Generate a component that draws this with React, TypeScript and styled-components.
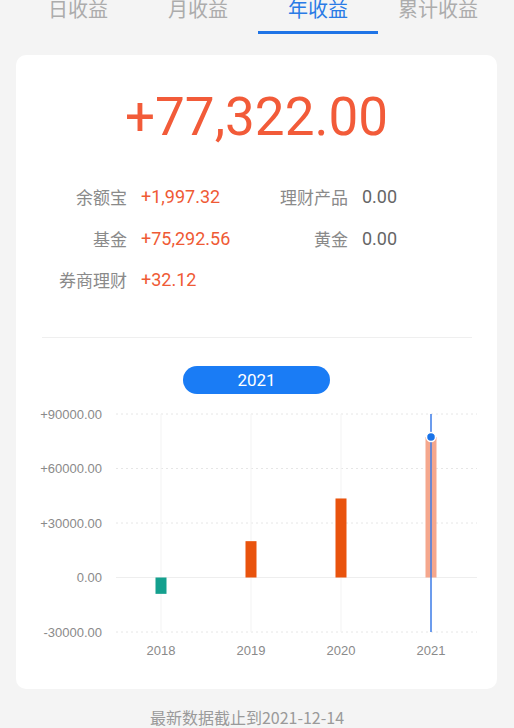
import React from "react";
import styled, { createGlobalStyle } from "styled-components";

const GlobalStyle = createGlobalStyle`
  html, body { margin: 0; padding: 0; background: #f4f4f4; }
  body { font-family: Roboto, "Noto Sans CJK SC", sans-serif; }
`;

const Page = styled.div`
  width: 514px;
  display: flex;
  flex-direction: column;
`;

const Tabs = styled.div`
  display: grid;
  grid-template-columns: repeat(4, 120px);
  margin-left: 18px;
  margin-top: -1px;
`;

const Tab = styled.div<{ $active?: boolean }>`
  height: 35px;
  box-sizing: border-box;
  text-align: center;
  font-family: "Noto Sans CJK SC", sans-serif;
  font-size: 20px;
  line-height: 20px;
  color: ${(p) => (p.$active ? "#2a7be6" : "#acacac")};
  border-bottom: 3px solid ${(p) => (p.$active ? "#1f74e6" : "transparent")};
`;

const Card = styled.div`
  margin: 21px 17px 0 16px;
  background: #ffffff;
  border-radius: 10px;
  padding: 30px 0 19px;
  display: flex;
  flex-direction: column;
`;

const BigNumber = styled.div`
  text-align: center;
  font-family: Roboto, sans-serif;
  font-size: 53px;
  line-height: 64px;
  color: #f25b39;
`;

const Stats = styled.div`
  display: grid;
  grid-template-columns: 111px 103px 90px auto;
  column-gap: 14px;
  margin-top: 27px;
`;

const Label = styled.div`
  text-align: right;
  font-family: "Noto Sans CJK SC", sans-serif;
  font-size: 17px;
  line-height: 41.5px;
  color: #8a8a8a;
`;

const Value = styled.div<{ $tone: "up" | "flat" }>`
  font-family: Roboto, sans-serif;
  font-size: 18px;
  line-height: 41.5px;
  color: ${(p) => (p.$tone === "up" ? "#ef5a35" : "#666666")};
`;

const Divider = styled.div`
  height: 1px;
  background: #efefef;
  margin: 36px 25px 0 26px;
`;

const YearPill = styled.div`
  margin: 28px auto 0;
  width: 147px;
  height: 28px;
  border-radius: 14px;
  background: #1a7cf5;
  color: #ffffff;
  font-family: Roboto, sans-serif;
  font-size: 17px;
  line-height: 28px;
  text-align: center;
`;

const ChartSvg = styled.svg`
  display: block;
  width: 481px;
  height: 276px;
`;

const Footer = styled.div`
  margin-top: 17px;
  padding-right: 20px;
  text-align: center;
  font-family: "Noto Sans CJK SC", sans-serif;
  font-size: 16px;
  line-height: 22px;
  color: #9a9a9a;
`;

const stats = [
  { label: "余额宝", value: "+1,997.32", tone: "up" as const, label2: "理财产品", value2: "0.00" },
  { label: "基金", value: "+75,292.56", tone: "up" as const, label2: "黄金", value2: "0.00" },
  { label: "券商理财", value: "+32.12", tone: "up" as const, label2: "", value2: "" },
];

const ticks = [
  { v: 90000, t: "+90000.00" },
  { v: 60000, t: "+60000.00" },
  { v: 30000, t: "+30000.00" },
  { v: 0, t: "0.00" },
  { v: -30000, t: "-30000.00" },
];

const bars = [
  { year: "2018", value: -9000, color: "#14a08e" },
  { year: "2019", value: 20000, color: "#e9530d" },
  { year: "2020", value: 43500, color: "#e9530d" },
  { year: "2021", value: 77322, color: "#f5a78d" },
];

const Chart: React.FC = () => {
  const zeroY = 183.5;
  const perUnit = 54.5 / 30000;
  const y = (v: number) => zeroY - v * perUnit;
  const left = 100;
  const right = 461;
  const band = 90;
  const cx = (i: number) => left + band * i + band / 2;
  return (
    <ChartSvg viewBox="0 0 481 276">
      {ticks.map((tk) => (
        <g key={tk.t}>
          <line
            x1={left}
            x2={right}
            y1={y(tk.v)}
            y2={y(tk.v)}
            stroke={tk.v === 0 ? "#eeeeee" : "#e6e6e6"}
            strokeWidth={1}
            strokeDasharray={tk.v === 0 ? undefined : "2 3"}
          />
          <text
            x={86}
            y={y(tk.v) + 4.5}
            textAnchor="end"
            fontFamily="'Liberation Sans', Arial, sans-serif"
            fontSize={13}
            fill="#8a8a8a"
          >
            {tk.t}
          </text>
        </g>
      ))}
      {bars.map((b, i) => (
        <line
          key={"v" + b.year}
          x1={cx(i)}
          x2={cx(i)}
          y1={y(90000)}
          y2={y(-30000)}
          stroke="#f3f3f3"
          strokeWidth={1}
        />
      ))}
      {bars.map((b, i) => {
        const top = Math.min(y(b.value), zeroY);
        const h = Math.abs(y(b.value) - zeroY);
        return (
          <rect key={b.year} x={cx(i) - 5.5} y={top} width={11} height={h} fill={b.color} />
        );
      })}
      {bars.map((b, i) => (
        <text
          key={"l" + b.year}
          x={cx(i)}
          y={261}
          textAnchor="middle"
          fontFamily="'Liberation Sans', Arial, sans-serif"
          fontSize={13}
          fill="#8a8a8a"
        >
          {b.year}
        </text>
      ))}
      <line x1={cx(3)} x2={cx(3)} y1={y(90000)} y2={y(-30000)} stroke="#3d7ce8" strokeWidth={1.5} />
      <circle cx={cx(3)} cy={y(77322)} r={4.5} fill="#1a73e8" stroke="#ffffff" strokeWidth={1.5} />
    </ChartSvg>
  );
};

export default function App() {
  return (
    <Page>
      <GlobalStyle />
      <Tabs>
        <Tab>日收益</Tab>
        <Tab>月收益</Tab>
        <Tab $active>年收益</Tab>
        <Tab>累计收益</Tab>
      </Tabs>
      <Card>
        <BigNumber>+77,322.00</BigNumber>
        <Stats>
          {stats.map((s) => (
            <React.Fragment key={s.label}>
              <Label>{s.label}</Label>
              <Value $tone={s.tone}>{s.value}</Value>
              <Label>{s.label2}</Label>
              <Value $tone="flat">{s.value2}</Value>
            </React.Fragment>
          ))}
        </Stats>
        <Divider />
        <YearPill>2021</YearPill>
        <Chart />
      </Card>
      <Footer>最新数据截止到2021-12-14</Footer>
    </Page>
  );
}
